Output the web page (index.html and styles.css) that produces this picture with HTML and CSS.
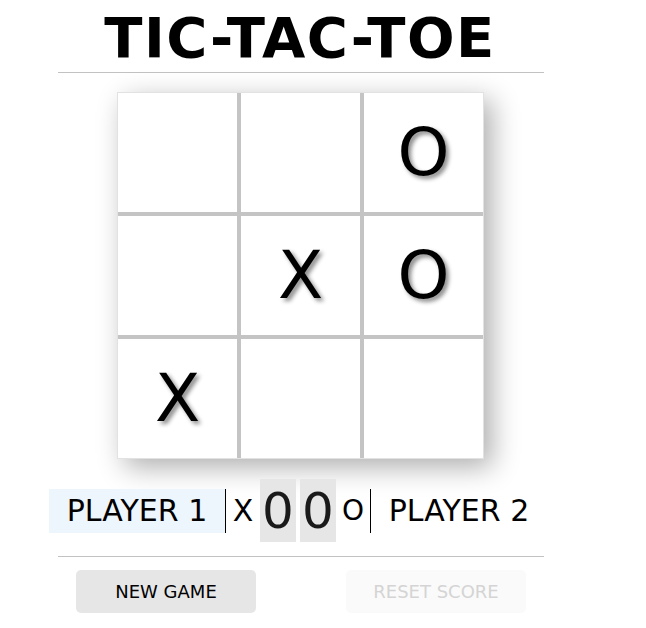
FILE: index.html
```html
<!DOCTYPE html>
<html>
<head>
<meta charset="utf-8">
<title>Tic-Tac-Toe</title>
<link rel="stylesheet" href="styles.css">
</head>
<body>
<div class="app">
  <h1 class="title">TIC-TAC-TOE</h1>
  <hr class="rule">
  <div class="board">
    <div class="cell"></div>
    <div class="cell"></div>
    <div class="cell">O</div>
    <div class="cell"></div>
    <div class="cell">X</div>
    <div class="cell">O</div>
    <div class="cell">X</div>
    <div class="cell"></div>
    <div class="cell"></div>
  </div>
  <div class="scores">
    <div class="player active">PLAYER 1</div>
    <span class="divider"></span>
    <span class="mark mark-x">X</span>
    <span class="digit">0</span>
    <span class="digit">0</span>
    <span class="mark mark-o">O</span>
    <span class="divider"></span>
    <div class="player">PLAYER 2</div>
  </div>
  <hr class="rule rule-bottom">
  <div class="actions">
    <button class="btn">NEW GAME</button>
    <button class="btn btn-disabled" disabled>RESET SCORE</button>
  </div>
</div>
</body>
</html>
```

FILE: styles.css
```css
html, body {
  margin: 0;
  padding: 0;
  background: #fff;
}
body {
  font-family: "DejaVu Sans", Verdana, sans-serif;
  color: #000;
}
.app {
  width: 486px;
  margin-left: 58px;
}
.title {
  margin: 0 0 0 -2px;
  padding-top: 5px;
  font-size: 56px;
  font-weight: bold;
  line-height: normal;
  text-align: center;
  letter-spacing: 1.5px;
}
.rule {
  margin: 2px 0 0;
  border: 0;
  border-top: 1px solid #c2c2c2;
  height: 0;
}
.board {
  display: grid;
  grid-template-columns: repeat(3, 119px);
  grid-template-rows: repeat(3, 119px);
  gap: 4px;
  width: max-content;
  margin: 19px 0 0 59px;
  background: #c4c4c4;
  border: 1px solid #e2e2e2;
  box-shadow: 8px 8px 26px rgba(0, 0, 0, 0.32);
}
.cell {
  background: #fff;
  display: flex;
  align-items: center;
  justify-content: center;
  font-size: 66px;
  line-height: 1;
  color: #000;
  text-shadow: 3px 3px 4px rgba(0, 0, 0, 0.45);
}
.scores {
  display: flex;
  align-items: center;
  width: 498px;
  margin: 20px 0 0 -9px;
}
.player {
  width: 176px;
  height: 44px;
  display: flex;
  align-items: center;
  justify-content: center;
  font-size: 30px;
  color: #000;
}
.player.active {
  background: #eef6fd;
}
.divider {
  width: 1px;
  height: 44px;
  background: #000;
}
.mark {
  width: 34px;
  text-align: center;
  color: #000;
  line-height: 1;
}
.mark-x {
  font-size: 30px;
}
.mark-o {
  font-size: 28px;
}
.digit {
  width: 36px;
  height: 63px;
  display: flex;
  align-items: center;
  justify-content: center;
  background: #e6e6e6;
  font-size: 50px;
  line-height: 1;
  color: #1a1a1a;
}
.digit + .digit {
  margin-left: 4px;
}
.rule-bottom {
  margin-top: 14px;
}
.actions {
  display: flex;
  justify-content: space-between;
  padding: 0 18px;
  margin-top: 13px;
}
.btn {
  width: 180px;
  height: 43px;
  border: 0;
  border-radius: 5px;
  background: #e6e6e6;
  color: #000;
  font-family: "DejaVu Sans", Verdana, sans-serif;
  font-size: 18px;
  padding: 0;
}
.btn-disabled {
  background: #fafafa;
  color: #d4d4d4;
}
```
